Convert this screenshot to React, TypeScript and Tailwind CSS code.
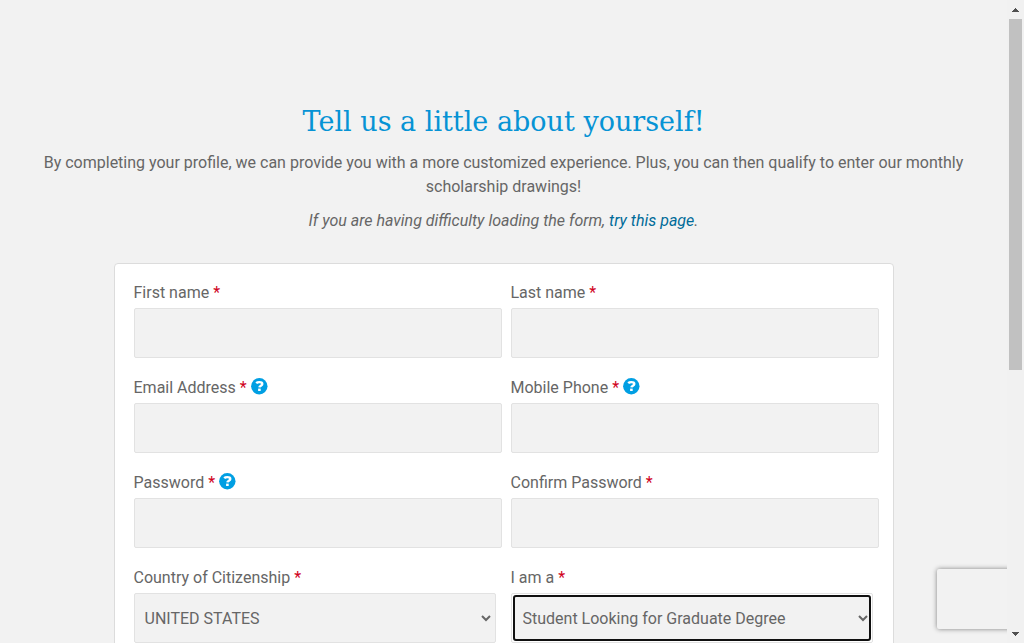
import { useId, type ReactNode } from "react";

type FieldProps = { label: string; help?: boolean };

function HelpIcon() {
  return (
    <svg width="17" height="17" viewBox="0 0 17 17" fill="none">
      <circle cx="8.3" cy="8.2" r="8.2" fill="#009fe3" />
      <path
        d="M5.2 5.2C6 4.4 7.1 4.1 8.4 4.1c1.8 0 2.9.7 2.9 2 0 1.6-2.8 1.6-2.9 3.3"
        stroke="#fff"
        strokeWidth="2.4"
      />
      <path d="M7.1 10.6h2.6v2.4H7.1z" fill="#fff" />
    </svg>
  );
}

function Label({ id, label, help }: FieldProps & { id: string }) {
  return (
    <div className="flex h-6 items-center gap-1">
      <label htmlFor={id}>
        {label} <span className="text-[#d0021b]">*</span>
      </label>
      {help && (
        <button type="button" aria-label={`${label} help`} className="-mt-1">
          <HelpIcon />
        </button>
      )}
    </div>
  );
}

function TextField({ label, help, type = "text" }: FieldProps & { type?: string }) {
  const id = useId();
  return (
    <div className="flex flex-col gap-[3px]">
      <Label id={id} label={label} help={help} />
      <input
        id={id}
        type={type}
        className="h-[50px] w-full rounded-xs border border-[#e2e2e2] bg-[#f2f2f2] px-2.5"
      />
    </div>
  );
}

function SelectField({ label, focused, children }: FieldProps & { focused?: boolean; children: ReactNode }) {
  const id = useId();
  return (
    <div className="flex flex-col gap-[3px] pr-1.5">
      <Label id={id} label={label} />
      <div
        className={
          focused
            ? "flex h-[50px] rounded-xs border border-[#e2e2e2] bg-white p-px"
            : "flex h-[50px] rounded-xs border border-[#e2e2e2] bg-[#f2f2f2] p-px"
        }
      >
        <select
          id={id}
          className={
            focused
              ? "w-full rounded-[3px] bg-[#f2f2f2] pl-1.5 outline-2 -outline-offset-2 outline-[#101010]"
              : "w-full bg-[#f2f2f2] pl-[5px] pr-1"
          }
        >
          {children}
        </select>
      </div>
    </div>
  );
}

function ScrollBar() {
  return (
    <div aria-hidden="true" className="flex w-[17px] shrink-0 flex-col items-center bg-[#f1f1f1] pr-px">
      <div className="flex h-[19px] shrink-0 items-center">
        <svg width="7" height="4" viewBox="0 0 7 4" shapeRendering="crispEdges" fill="#505050">
          <path d="M3 0h1v1h1v1h1v1h1v1H0V3h1V2h1V1h1z" />
        </svg>
      </div>
      <div className="w-full flex-1 px-px pl-0.5">
        <div className="h-[58%] w-[13px] bg-[#c1c1c1]" />
      </div>
      <div className="flex h-[19px] shrink-0 items-center">
        <svg width="7" height="4" viewBox="0 0 7 4" shapeRendering="crispEdges" fill="#505050">
          <path d="M0 0h7v1H6v1H5v1H4v1H3V3H2V2H1V1H0z" />
        </svg>
      </div>
    </div>
  );
}

export default function App() {
  return (
    <div className="flex h-screen overflow-hidden bg-[#f2f2f2] font-['Roboto',sans-serif] text-base text-[#666666]">
      <main className="relative min-w-0 flex-1 overflow-hidden px-5 pt-[102px]">
        <header className="text-center">
          <h1 className="font-['Roboto_Slab','DejaVu_Serif',serif] text-[27px] leading-10 text-[#0693d5]">
            Tell us a little about yourself!
          </h1>
          <p className="mt-[9px] leading-6">
            By completing your profile, we can provide you with a more customized experience. Plus, you can then
            qualify to enter our monthly scholarship drawings!
          </p>
          <p className="mt-2.5 italic leading-6">
            If you are having difficulty loading the form,{" "}
            <a href="#form" className="text-[#006b99]">
              try this page
            </a>
            .
          </p>
        </header>
        <form
          id="form"
          className="mx-auto mt-[30px] grid max-w-[780px] grid-cols-2 gap-x-[9px] gap-y-[18px] rounded-sm border border-[#dcdcdc] bg-white pt-[17px] pr-3.5 pb-8 pl-[19px]"
        >
          <TextField label="First name" />
          <TextField label="Last name" />
          <TextField label="Email Address" help type="email" />
          <TextField label="Mobile Phone" help type="tel" />
          <TextField label="Password" help type="password" />
          <TextField label="Confirm Password" type="password" />
          <SelectField label="Country of Citizenship">
            <option>UNITED STATES</option>
          </SelectField>
          <SelectField label="I am a" focused>
            <option>Student Looking for Graduate Degree</option>
          </SelectField>
        </form>
        <div className="absolute -right-[186px] bottom-3.5 h-[60px] w-64 rounded-xs bg-[#f2f2f2] shadow-[0_0_5px_gray]" />
      </main>
      <ScrollBar />
    </div>
  );
}
